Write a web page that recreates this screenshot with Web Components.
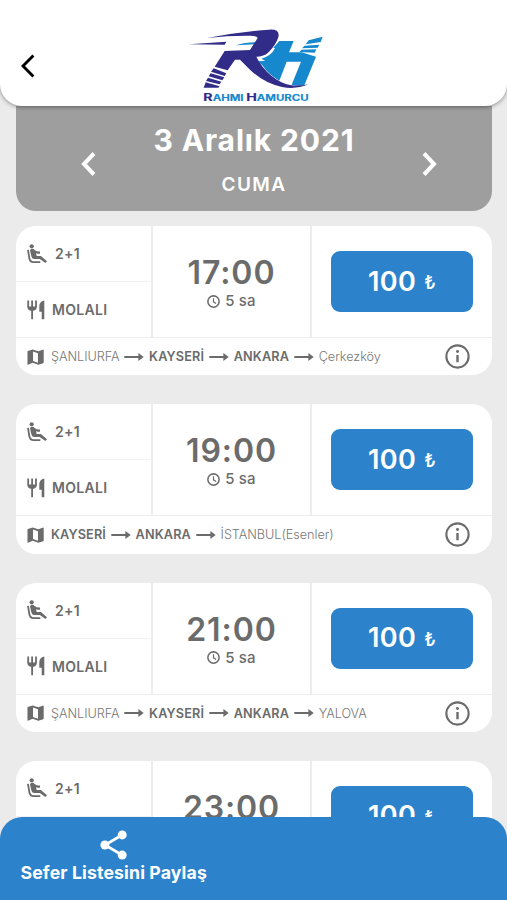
<!DOCTYPE html>
<html lang="tr">
<head>
<meta charset="utf-8">
<meta name="viewport" content="width=device-width, initial-scale=1">
<title>Sefer Listesi</title>
<style>
  * { box-sizing: border-box; }
  html, body { height: 100%; }
  body {
    margin: 0;
    overflow: hidden;
    background: #ebebeb;
    color: #6b6b6b;
    font-family: Inter, "Liberation Sans", sans-serif;
  }
</style>
</head>
<body>
<trip-screen></trip-screen>

<script>
// Icon shapes, all drawn with currentColor.
const ICONS = {
  back: { box: "0 0 14 24", body: `<path d="M12.4 1.4 2 12l10.4 10.6" fill="none" stroke="currentColor" stroke-width="2.9"/>` },
  prev: { box: "0 0 15 24", body: `<path d="M13 1.5 3 12l10 10.5" fill="none" stroke="currentColor" stroke-width="4"/>` },
  next: { box: "0 0 15 24", body: `<path d="M2 1.5 12 12 2 22.5" fill="none" stroke="currentColor" stroke-width="4"/>` },
  seat: {
    box: "0 0 20 20",
    body: `<circle cx="4.7" cy="2.3" r="2.1" fill="currentColor"/>
      <path d="M1 5.8 2.3 14q.7 4.1 4.2 4.1h6.8" fill="none" stroke="currentColor" stroke-width="1.8"/>
      <path d="M3 6.4q.2-1.7 2.2-1.7 1.4 0 2.5 1.4 1.9 1.7 5.3 1.5v2.2q-2 .1-4-.6l.7 2.8h4.2l6.1 5.3-1.6 1.7-5.6-3.9H7.4q-2.4 0-3-2.6z" fill="currentColor"/>`
  },
  meal: {
    box: "0 0 18 20",
    body: `<path d="M1.2.6V7M5.1.6v18.6M9 .6V7" fill="none" stroke="currentColor" stroke-width="1.8"/>
      <path d="M.3 6.4h9.6q0 3.3-3.4 4.4H3.7Q.3 9.7.3 6.4z" fill="currentColor"/>
      <path d="M17.3.4v18.8h-2.6v-7.5h-2.4V6q0-4.3 5-5.6z" fill="currentColor"/>`
  },
  map: {
    box: "0 0 18 18",
    body: `<path fill="currentColor" fill-rule="evenodd" d="M17.3 1 12 3 6 1 .8 2.7Q.5 3 .5 3.4V16.7q.1.5.6.4L6 15.2l6 2 5.2-1.7q.5-.2.5-.6V1.5q0-.4-.4-.5zM6.4 3.3 11.6 5v10L6.4 13.2z"/>`
  },
  clock: {
    box: "0 0 24 24",
    body: `<circle cx="12" cy="12" r="10.4" fill="none" stroke="currentColor" stroke-width="2.8"/>
      <path d="M12 6v6.6l4.8 3" fill="none" stroke="currentColor" stroke-width="2.2"/>`
  },
  info: {
    box: "0 0 24 24",
    body: `<circle cx="12" cy="12" r="10.7" fill="none" stroke="currentColor" stroke-width="2"/>
      <circle cx="12" cy="7.2" r="1.4" fill="currentColor"/>
      <path d="M12 10.5v7" stroke="currentColor" stroke-width="2.3"/>`
  },
  arrow: {
    box: "0 0 20 10",
    body: `<path d="M.3 5H17" stroke="currentColor" stroke-width="1.9"/>
      <path d="M14.4 1 19.7 5l-5.3 4z" fill="currentColor"/>`
  },
  share: {
    box: "0 0 27 30",
    body: `<path d="M22 5 5 15l17 10" fill="none" stroke="currentColor" stroke-width="2.7"/>
      <circle cx="22.2" cy="4.9" r="4.5" fill="currentColor"/>
      <circle cx="4.9" cy="15" r="4.5" fill="currentColor"/>
      <circle cx="22.2" cy="25.1" r="4.5" fill="currentColor"/>`
  },
};

class UiIcon extends HTMLElement {
  constructor() {
    super();
    this.attachShadow({ mode: "open" });
  }

  connectedCallback() {
    const icon = ICONS[this.getAttribute("name")];
    this.shadowRoot.innerHTML = `
      <style>
        :host { display: block; flex: none; }
        svg { display: block; width: 100%; height: 100%; }
      </style>
      <svg viewBox="${icon.box}" aria-hidden="true">${icon.body}</svg>
    `;
  }
}

class BrandLogo extends HTMLElement {
  constructor() {
    super();
    this.attachShadow({ mode: "open" }).innerHTML = `
      <style>
        :host { display: block; width: 150px; height: 90px; }
        svg { display: block; width: 100%; height: 100%; }
        text { font-family: Inter, "Liberation Sans", sans-serif; font-weight: 700; }
      </style>
      <svg viewBox="0 0 450 270" role="img" aria-label="Rahmi Hamurcu">
        <g fill="#1688cd">
          <path d="M168 76 Q195 67 232 67 L228 73z"/>
          <path d="M298 63h43l-14 34h38l43 13-35 86q-20 3-38-2l28-69h-43l-22 57q-32-17-51-46l-14-12 23-2-12-6q30-8 41-31l-5-2z"/>
          <path d="m386 61 42-11-6 16-45 7zM374 77l44-3-5 9-47 2zM365 89l44-1-5 10-46-2z"/>
        </g>
        <g fill="#302c88">
          <path d="M27 72.500 139 65 134 74z"/>
          <path d="M82 54Q180 35 268 29q33-2 27 23-8 25-31 46-12 11-35 12 16 33 45 57 27 22 56 28 26 4 56-2-38 16-80 8-55-12-96-52l-30-30h-15l-22 32-39-11 30-47 76-3 23-36q-2-7-22-7-62-1-129 7z"/>
          <path d="m101 145 38 15-5 8-41-13zM92 160l41 12-6 9-41-12zM84 173l40 12-5 8-41-10zM77 187l42 12-4 4H71z"/>
        </g>
        <text x="70" y="243" font-size="25" textLength="316" lengthAdjust="spacingAndGlyphs" fill="#1688cd" stroke="#1688cd" stroke-width=".4"><tspan fill="#302c88" stroke="#302c88" font-size="31">R</tspan>AHMI <tspan fill="#302c88" stroke="#302c88" font-size="31">H</tspan>AMURCU</text>
      </svg>
    `;
  }
}

class AppHeader extends HTMLElement {
  constructor() {
    super();
    this.attachShadow({ mode: "open" }).innerHTML = `
      <style>
        :host {
          display: flex;
          align-items: flex-start;
          flex: none;
          box-sizing: border-box;
          height: 106px;
          padding: 20px 0 0 21px;
          background: #fff;
          border-radius: 0 0 22px 22px;
          box-shadow: 0 1px 4px rgba(0, 0, 0, 0.4);
          position: relative;
          z-index: 1;
        }
        ui-icon { width: 14px; height: 24px; margin: 34px 145px 0 0; color: #000; }
      </style>
      <ui-icon name="back"></ui-icon>
      <brand-logo></brand-logo>
    `;
  }
}

class DateBar extends HTMLElement {
  constructor() {
    super();
    this.attachShadow({ mode: "open" }).innerHTML = `
      <style>
        :host {
          display: grid;
          grid-template-columns: 15px 1fr 15px;
          flex: none;
          box-sizing: border-box;
          height: 105px;
          margin: 0 15px 0 15.6px;
          padding: 0 55px 0 65.4px;
          background: #9e9e9e;
          border-radius: 0 0 20px 20px;
          color: #fff;
          text-align: center;
        }
        ui-icon { width: 15px; height: 24px; margin-top: 46px; }
        .text { padding: 15px 10px 0 0; }
        .date { font-size: 30px; line-height: 38px; font-weight: 700; letter-spacing: 0.85px; white-space: nowrap; }
        .day { margin-top: 15px; font-size: 19px; line-height: 22px; font-weight: 600; letter-spacing: 1.4px; }
      </style>
      <ui-icon name="prev"></ui-icon>
      <div class="text">
        <div class="date"><slot name="date"></slot></div>
        <div class="day"><slot name="day"></slot></div>
      </div>
      <ui-icon name="next"></ui-icon>
    `;
  }
}

class TripCard extends HTMLElement {
  constructor() {
    super();
    this.attachShadow({ mode: "open" });
  }

  connectedCallback() {
    // stops starting with * are the ones on the selected leg
    const stops = this.getAttribute("route").split("|").map((stop) => {
      const main = stop.startsWith("*");
      return `<span class="${main ? "main" : "stop"}">${main ? stop.slice(1) : stop}</span>`;
    });
    this.shadowRoot.innerHTML = `
      <style>
        :host {
          display: block;
          flex: none;
          height: 149.3px;
          background: #fff;
          border-radius: 20px;
          overflow: hidden;
        }
        .top {
          display: grid;
          grid-template-columns: 135.4px 161px 1fr;
          height: 111px;
        }
        .features { display: grid; grid-template-rows: 56px 55px; }
        .feature {
          display: flex;
          align-items: center;
          padding-left: 11.4px;
          box-sizing: border-box;
          font-size: 14px;
          font-weight: 600;
          letter-spacing: 0.3px;
        }
        .feature:first-child { border-bottom: 1px solid #f1f1f1; }
        .seat { width: 20px; height: 20px; margin-right: 8px; }
        .meal { width: 18px; height: 20px; margin-right: 7px; }
        .depart {
          box-sizing: border-box;
          border: solid #ededed;
          border-width: 0 2px;
          padding: 27px 0 0;
          text-align: center;
        }
        .time { font-size: 32px; line-height: 40px; font-weight: 600; letter-spacing: 0.9px; }
        .duration {
          display: flex;
          align-items: center;
          justify-content: center;
          gap: 5px;
          margin-top: -1px;
          font-size: 15px;
          line-height: 18px;
          font-weight: 500;
          letter-spacing: 0.2px;
        }
        .duration ui-icon { width: 13px; height: 13px; }
        .buy { padding: 25px 0 0 19px; }
        button {
          display: flex;
          align-items: center;
          justify-content: center;
          width: 142px;
          height: 61px;
          padding: 0 0 1px;
          border: 0;
          border-radius: 9px;
          background: #2c83cc;
          color: #fff;
          font: 600 27px/1 Inter, sans-serif;
          letter-spacing: 0.4px;
        }
        .lira { margin: 3px 0 0 8px; font-size: 19px; font-weight: 500; letter-spacing: 0; }
        .route {
          display: flex;
          align-items: center;
          box-sizing: border-box;
          height: 38.3px;
          border-top: 1px solid #eee;
          padding: 0 22px 0 11.4px;
          font-size: 12.7px;
          white-space: nowrap;
        }
        .map { width: 17px; height: 18px; margin-right: 7px; }
        .arrow { width: 20px; height: 10px; margin: 0 4.8px; }
        .main { font-weight: 600; letter-spacing: 0.15px; }
        .stop { font-weight: 300; color: #777; letter-spacing: -0.05px; }
        .info { width: 25px; height: 25px; margin-left: auto; }
      </style>
      <div class="top">
        <div class="features">
          <div class="feature"><ui-icon class="seat" name="seat"></ui-icon>2+1</div>
          <div class="feature"><ui-icon class="meal" name="meal"></ui-icon>MOLALI</div>
        </div>
        <div class="depart">
          <div class="time">${this.getAttribute("time")}</div>
          <div class="duration"><ui-icon name="clock"></ui-icon><span>5 sa</span></div>
        </div>
        <div class="buy"><button>100<span class="lira">₺</span></button></div>
      </div>
      <div class="route">
        <ui-icon class="map" name="map"></ui-icon>
        ${stops.join(`<ui-icon class="arrow" name="arrow"></ui-icon>`)}
        <ui-icon class="info" name="info"></ui-icon>
      </div>
    `;
  }
}

class ShareBar extends HTMLElement {
  constructor() {
    super();
    this.attachShadow({ mode: "open" }).innerHTML = `
      <style>
        :host {
          display: flex;
          flex: none;
          box-sizing: border-box;
          height: 83px;
          padding: 13px 0 0 20.5px;
          background: #2c83cc;
          border-radius: 22px 22px 0 0;
          color: #fff;
          position: relative;
          z-index: 1;
        }
        .action { display: flex; flex-direction: column; align-items: center; }
        ui-icon { width: 27px; height: 30px; }
        .label { margin-top: 2px; font-size: 17.7px; line-height: 22px; font-weight: 700; letter-spacing: 0.12px; white-space: nowrap; }
      </style>
      <div class="action">
        <ui-icon name="share"></ui-icon>
        <div class="label"><slot></slot></div>
      </div>
    `;
  }
}

class TripScreen extends HTMLElement {
  constructor() {
    super();
    this.attachShadow({ mode: "open" }).innerHTML = `
      <style>
        :host { display: flex; flex-direction: column; height: 900px; overflow: hidden; }
        .list {
          display: flex;
          flex-direction: column;
          gap: 29px;
          flex: 1;
          min-height: 0;
          padding: 15px 15px 0 15.6px;
          margin-bottom: -22px;
          overflow: hidden;
        }
      </style>
      <app-header></app-header>
      <date-bar>
        <span slot="date">3 Aralık 2021</span>
        <span slot="day">CUMA</span>
      </date-bar>
      <div class="list">
        <trip-card time="17:00" route="ŞANLIURFA|*KAYSERİ|*ANKARA|Çerkezköy"></trip-card>
        <trip-card time="19:00" route="*KAYSERİ|*ANKARA|İSTANBUL(Esenler)"></trip-card>
        <trip-card time="21:00" route="ŞANLIURFA|*KAYSERİ|*ANKARA|YALOVA"></trip-card>
        <trip-card time="23:00" route="ŞANLIURFA|*KAYSERİ|*ANKARA|YALOVA"></trip-card>
      </div>
      <share-bar>Sefer Listesini Paylaş</share-bar>
    `;
  }
}

customElements.define("ui-icon", UiIcon);
customElements.define("brand-logo", BrandLogo);
customElements.define("app-header", AppHeader);
customElements.define("date-bar", DateBar);
customElements.define("trip-card", TripCard);
customElements.define("share-bar", ShareBar);
customElements.define("trip-screen", TripScreen);
</script>
</body>
</html>
